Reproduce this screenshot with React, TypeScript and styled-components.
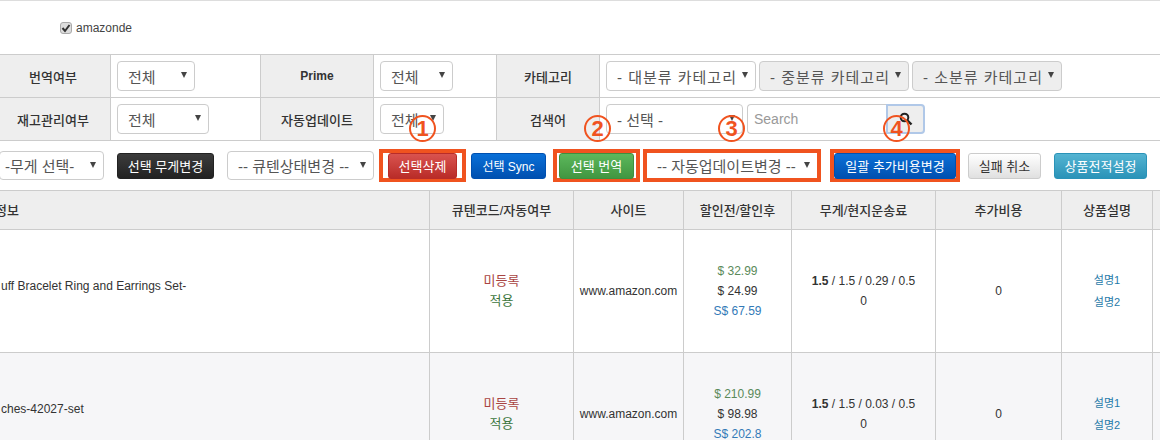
import React from "react";
import styled, { createGlobalStyle } from "styled-components";

const GlobalStyle = createGlobalStyle`
  html, body {
    margin: 0;
    padding: 0;
    background: #fff;
    overflow: hidden;
  }
  body {
    font-family: "Liberation Sans", "Noto Sans CJK KR", sans-serif;
    font-size: 12px;
    color: #333;
  }
`;

const ORANGE = "#f0531f";

function App() {
  return (
    <>
      <GlobalStyle />
      <Page>
        <SiteBar>
          <CheckBox>
            <svg width="10" height="10" viewBox="0 0 10 10">
              <path d="M1.5 5 L4 8 L8.5 2" fill="none" stroke="#333" strokeWidth="2" />
            </svg>
          </CheckBox>
          <span>amazonde</span>
        </SiteBar>

        <FilterGrid>
          <Label>번역여부</Label>
          <Field>
            <Select $w={78}>전체<Caret /></Select>
          </Field>
          <Label $side>
            <LatinLabel>Prime</LatinLabel>
          </Label>
          <Field>
            <Select $w={73}>전체<Caret /></Select>
          </Field>
          <Label $side>카테고리</Label>
          <Field>
            <Select $w={150} $wide>- 대분류 카테고리<Caret /></Select>
            <Select $w={150} $wide $disabled>- 중분류 카테고리<Caret /></Select>
            <Select $w={150} $wide $disabled>- 소분류 카테고리<Caret /></Select>
          </Field>
          <Label>재고관리여부</Label>
          <Field>
            <Select $w={92}>전체<Caret /></Select>
          </Field>
          <Label $side>자동업데이트</Label>
          <Field>
            <Select $w={64}>전체<Caret /></Select>
          </Field>
          <Label $side>검색어</Label>
          <Field>
            <Select $w={137}>- 선택 -<Caret /></Select>
            <SearchGroup>
              <SearchInput>Search</SearchInput>
              <SearchButton>
                <svg width="14" height="14" viewBox="0 0 14 14">
                  <circle cx="5.5" cy="5.5" r="3.8" fill="none" stroke="#222" strokeWidth="2" />
                  <path d="M8.5 8.5 L12.5 12.5" stroke="#222" strokeWidth="2.4" />
                </svg>
              </SearchButton>
            </SearchGroup>
          </Field>
          <Badge $x={413}>1</Badge>
          <Badge $x={588}>2</Badge>
          <Badge $x={722}>3</Badge>
          <Badge $x={887}>4</Badge>
        </FilterGrid>

        <ActionBar>
          <Select $w={105} $h={29} $gap={13} $first>-무게 선택-<Caret /></Select>
          <Button $tone="dark" $w={97} $gap={13}>선택 무게변경</Button>
          <Select $w={147} $h={29} $gap={5}>-- 큐텐상태변경 --<Caret /></Select>
          <Marked $w={87} $pad={5} $gap={5}>
            <Button $tone="red" $w={69}>선택삭제</Button>
          </Marked>
          <Button $tone="blue" $w={75} $gap={7}>
            <SyncText>선택 Sync</SyncText>
          </Button>
          <Marked $w={87} $pad={2} $gap={3}>
            <Button $tone="green" $w={75}>선택 번역</Button>
          </Marked>
          <Marked $w={178} $pad={0} $gap={9}>
            <Select $w={170} $h={25} $bare>-- 자동업데이트변경 --<Caret /></Select>
          </Marked>
          <Marked $w={130} $pad={0} $gap={8}>
            <Button $tone="blue" $w={122}>일괄 추가비용변경</Button>
          </Marked>
          <Button $tone="light" $w={73} $gap={13}>실패 취소</Button>
          <Button $tone="cyan" $w={93}>상품전적설정</Button>
        </ActionBar>

        <ListTable>
          <colgroup>
            <Column $w={433} />
            <Column $w={144} />
            <Column $w={110} />
            <Column $w={108} />
            <Column $w={144} />
            <Column $w={126} />
            <Column $w={91} />
            <Column $w={12} />
          </colgroup>
          <thead>
            <tr>
              <HeadCell $left>정보</HeadCell>
              <HeadCell>큐텐코드/자동여부</HeadCell>
              <HeadCell>사이트</HeadCell>
              <HeadCell>할인전/할인후</HeadCell>
              <HeadCell>무게/현지운송료</HeadCell>
              <HeadCell>추가비용</HeadCell>
              <HeadCell>상품설명</HeadCell>
              <HeadCell />
            </tr>
          </thead>
          <tbody>
            {rows.map((row) => (
              <Row key={row.name} $striped={row.striped}>
                <Cell $left>{row.name}</Cell>
                <Cell>
                  <Danger>미등록</Danger>
                  <Applied>적용</Applied>
                </Cell>
                <Cell>www.amazon.com</Cell>
                <Cell>
                  <PriceBefore>{row.before}</PriceBefore>
                  <div>{row.after}</div>
                  <PriceSale>{row.sale}</PriceSale>
                </Cell>
                <Cell>
                  <div>
                    <b>1.5</b> / 1.5 / {row.fee} / 0.5
                  </div>
                  <div>0</div>
                </Cell>
                <Cell>0</Cell>
                <Cell>
                  <DescLink>설명1</DescLink>
                  <DescLink>설명2</DescLink>
                </Cell>
                <Cell />
              </Row>
            ))}
          </tbody>
        </ListTable>
      </Page>
    </>
  );
}

export default App;

const rows = [
  {
    name: "uff Bracelet Ring and Earrings Set-",
    before: "$ 32.99",
    after: "$ 24.99",
    sale: "S$ 67.59",
    fee: "0.29",
    striped: false,
  },
  {
    name: "ches-42027-set",
    before: "$ 210.99",
    after: "$ 98.98",
    sale: "S$ 202.8",
    fee: "0.03",
    striped: true,
  },
];

const tones = {
  dark: { from: "#3c3c3c", to: "#222", border: "#222", color: "#fff" },
  red: { from: "#d9534f", to: "#b92c28", border: "#b92c28", color: "#fff" },
  blue: { from: "#0a70d8", to: "#0050b0", border: "#0050b0", color: "#fff" },
  green: { from: "#5cb85c", to: "#419641", border: "#3e8f3e", color: "#fff" },
  light: { from: "#fff", to: "#e0e0e0", border: "#ccc", color: "#333" },
  cyan: { from: "#54b4d2", to: "#2a93b8", border: "#2a93b8", color: "#fff" },
};

const Page = styled.div`
  width: 1168px;
  margin-left: -4px;
  height: 440px;
  overflow: hidden;
`;

const SiteBar = styled.div`
  display: flex;
  align-items: center;
  gap: 4px;
  height: 54px;
  padding-left: 64px;
  box-sizing: border-box;
  border-top: 1px solid #ddd;
  color: #444;
`;

const CheckBox = styled.span`
  display: flex;
  align-items: center;
  justify-content: center;
  width: 12px;
  height: 12px;
  box-sizing: border-box;
  border: 1px solid #aaa;
  border-radius: 3px;
  background: #ddd;
`;

const FilterGrid = styled.div`
  position: relative;
  display: grid;
  grid-template-columns: 115px 149px 114px 122px 104px 1fr;
  grid-auto-rows: 43px;
  border-top: 1px solid #ccc;
`;

const Label = styled.div<{ $side?: boolean }>`
  display: flex;
  align-items: center;
  justify-content: center;
  background: #eee;
  font-size: 13px;
  font-weight: 500;
  border-left: ${(p) => (p.$side ? "1px solid #ccc" : "0")};
  border-right: 1px solid #ccc;
  border-bottom: 1px solid #ccc;
`;

const LatinLabel = styled.span`
  font-size: 12px;
  font-weight: bold;
`;

const Field = styled.div`
  display: flex;
  align-items: center;
  gap: 3px;
  padding-left: 6px;
  border-bottom: 1px solid #ccc;
`;

const Select = styled.div<{
  $w: number;
  $h?: number;
  $gap?: number;
  $disabled?: boolean;
  $bare?: boolean;
  $first?: boolean;
  $wide?: boolean;
}>`
  position: relative;
  flex: none;
  width: ${(p) => p.$w}px;
  height: ${(p) => p.$h ?? 30}px;
  margin-left: ${(p) => (p.$first ? 3 : 0)}px;
  margin-right: ${(p) => p.$gap ?? 0}px;
  padding-left: ${(p) => (p.$first ? 5 : 10)}px;
  box-sizing: border-box;
  display: flex;
  align-items: center;
  font-size: 15px;
  letter-spacing: ${(p) => (p.$wide ? 1 : 0)}px;
  color: #555;
  white-space: nowrap;
  background: ${(p) => (p.$disabled ? "#eee" : "#fff")};
  border: ${(p) => (p.$bare ? "0" : "1px solid #ccc")};
  border-radius: ${(p) => (p.$bare ? 0 : 4)}px;
`;

const Caret = styled.i`
  position: absolute;
  top: 50%;
  right: 7px;
  margin-top: -4px;
  border-left: 3px solid transparent;
  border-right: 3px solid transparent;
  border-top: 6px solid #444;
`;

const SearchGroup = styled.div`
  display: flex;
  margin-left: 1px;
`;

const SearchInput = styled.div`
  width: 139px;
  height: 30px;
  box-sizing: border-box;
  padding-left: 6px;
  display: flex;
  align-items: center;
  font-size: 14px;
  color: #999;
  border: 1px solid #ccc;
  border-right: 0;
  border-radius: 4px 0 0 4px;
`;

const SearchButton = styled.div`
  width: 39px;
  height: 30px;
  box-sizing: border-box;
  display: flex;
  align-items: center;
  justify-content: center;
  background: #eee;
  border: 2px solid #b0c8e8;
  border-radius: 0 4px 4px 0;
`;

const Badge = styled.span<{ $x: number }>`
  position: absolute;
  top: 60px;
  left: ${(p) => p.$x}px;
  width: 27px;
  height: 27px;
  box-sizing: border-box;
  display: flex;
  align-items: center;
  justify-content: center;
  border: 2px solid ${ORANGE};
  border-radius: 50%;
  font-size: 22px;
  font-weight: bold;
  color: ${ORANGE};
`;

const ActionBar = styled.div`
  display: flex;
  align-items: center;
  height: 49px;
`;

const SyncText = styled.span`
  font-size: 12px;
`;

const Button = styled.div<{ $tone: keyof typeof tones; $w: number; $gap?: number }>`
  flex: none;
  width: ${(p) => p.$w}px;
  height: 26px;
  margin-right: ${(p) => p.$gap ?? 0}px;
  box-sizing: border-box;
  display: flex;
  align-items: center;
  justify-content: center;
  font-size: 13px;
  white-space: nowrap;
  border-radius: 3px;
  color: ${(p) => tones[p.$tone].color};
  background: linear-gradient(${(p) => tones[p.$tone].from}, ${(p) => tones[p.$tone].to});
  border: 1px solid ${(p) => tones[p.$tone].border};
`;

const Marked = styled.div<{ $w: number; $pad: number; $gap: number }>`
  flex: none;
  width: ${(p) => p.$w}px;
  height: 33px;
  margin-right: ${(p) => p.$gap}px;
  box-sizing: border-box;
  display: flex;
  align-items: center;
  justify-content: center;
  border: 4px solid ${ORANGE};
  padding: 0 ${(p) => p.$pad}px;
`;

const ListTable = styled.table`
  width: 1168px;
  table-layout: fixed;
  border-collapse: collapse;
`;

const Column = styled.col<{ $w: number }>`
  width: ${(p) => p.$w}px;
`;

const HeadCell = styled.th<{ $left?: boolean }>`
  height: 39px;
  padding: 0 0 2px;
  box-sizing: border-box;
  background: #eee;
  font-size: 13px;
  font-weight: 500;
  color: #333;
  text-align: ${(p) => (p.$left ? "left" : "center")};
  text-indent: ${(p) => (p.$left ? -2 : 0)}px;
  border: 1px solid #ccc;
`;

const Row = styled.tr<{ $striped: boolean }>`
  height: 123px;
  background: ${(p) => (p.$striped ? "#f6f6f8" : "#fff")};
`;

const Cell = styled.td<{ $left?: boolean }>`
  padding: 0 0 ${(p) => (p.$left ? 11 : 0)}px ${(p) => (p.$left ? 4 : 0)}px;
  text-align: ${(p) => (p.$left ? "left" : "center")};
  line-height: 20px;
  color: #333;
  border: 1px solid #ccc;
`;

const Danger = styled.div`
  font-size: 13px;
  color: #a94442;
`;

const Applied = styled.div`
  font-size: 13px;
  color: #3c763d;
`;

const PriceBefore = styled.div`
  color: #5a8a5a;
`;

const PriceSale = styled.div`
  color: #337ab7;
`;

const DescLink = styled.div`
  font-size: 11px;
  line-height: 22px;
  color: #1f7aa8;
`;
